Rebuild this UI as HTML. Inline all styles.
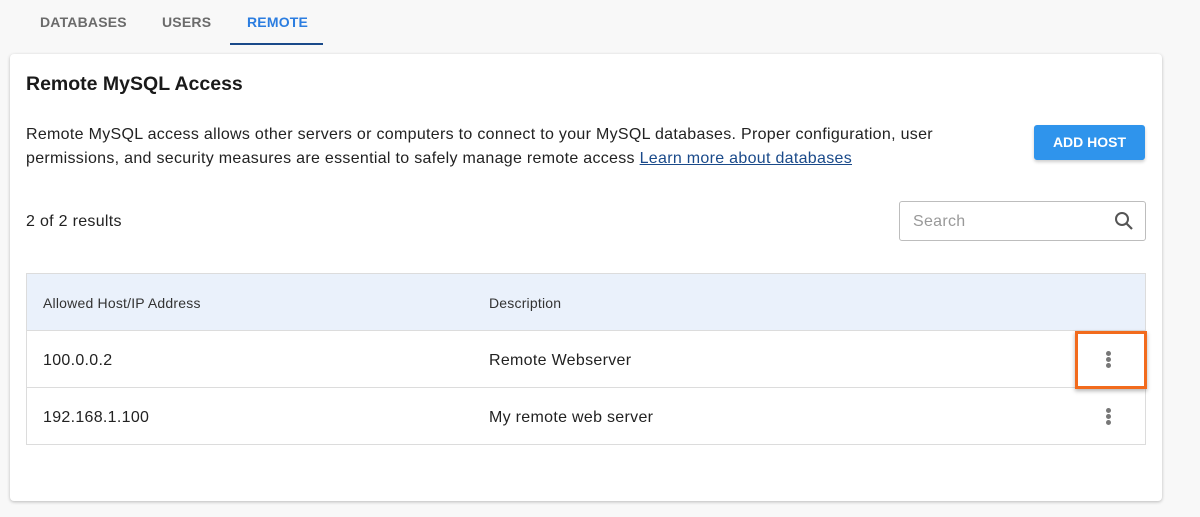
<!DOCTYPE html>
<html><head><style>
*{box-sizing:border-box;margin:0;padding:0}
body{width:1200px;height:517px;background:#f8f8f8;font-family:"Liberation Sans",sans-serif;color:#222;position:relative;overflow:hidden}
.tab{position:absolute;top:14px;font-size:14px;font-weight:bold;letter-spacing:0.2px;color:#6b6b6b}
.card{position:absolute;left:10px;top:54px;width:1152px;height:447px;background:#fff;border-radius:4px;box-shadow:0 1px 3px rgba(0,0,0,.25)}
.abs{position:absolute}
.t16{font-size:16px;letter-spacing:0.3px}
.row{position:absolute;left:26px;width:1120px;border:1px solid #dcdcdc;border-top:none;height:57px}
.dots{position:absolute;left:1106px;width:5px}
.dots i{display:block;width:5px;height:5px;border-radius:50%;background:#777;margin-bottom:1px}
</style></head><body>
<div class="tab" style="left:40px">DATABASES</div>
<div class="tab" style="left:162px">USERS</div>
<div class="tab" style="left:247px;color:#2b7de0">REMOTE</div>
<div class="abs" style="left:230px;top:43px;width:93px;height:2px;background:#1a4a8a"></div>
<div class="card"></div>
<div class="abs" style="left:26px;top:73px;font-size:19.5px;font-weight:bold;color:#1a1a1a">Remote MySQL Access</div>
<div class="abs t16" style="left:26px;top:123px;line-height:24px;width:960px;color:#222">Remote MySQL access allows other servers or computers to connect to your MySQL databases. Proper configuration, user permissions, and security measures are essential to safely manage remote access <span style="color:#1a4a8a;text-decoration:underline">Learn more about databases</span></div>
<div class="abs" style="left:1034px;top:125px;width:111px;height:35px;background:#2f94ec;border-radius:3px;color:#fff;font-weight:bold;font-size:14px;line-height:35px;text-align:center;box-shadow:0 2px 3px rgba(0,0,0,.2)">ADD HOST</div>
<div class="abs t16" style="left:26px;top:213px">2 of 2 results</div>
<div class="abs" style="left:899px;top:201px;width:247px;height:40px;border:1px solid #bdbdbd;border-radius:3px"></div>
<div class="abs t16" style="left:913px;top:213px;color:#999">Search</div>
<svg class="abs" style="left:1113px;top:210px" width="22" height="22" viewBox="0 0 22 22"><circle cx="9" cy="9" r="6" fill="none" stroke="#555" stroke-width="2"/><line x1="13.5" y1="13.5" x2="19" y2="19" stroke="#555" stroke-width="2.2"/></svg>
<div class="abs" style="left:26px;top:273px;width:1120px;height:58px;background:#eaf1fb;border:1px solid #dcdcdc"></div>
<div class="abs" style="left:43px;top:295px;font-size:14px;letter-spacing:0.2px;color:#333">Allowed Host/IP Address</div>
<div class="abs" style="left:489px;top:295px;font-size:14px;letter-spacing:0.2px;color:#333">Description</div>
<div class="row" style="top:331px"></div>
<div class="row" style="top:388px"></div>
<div class="abs t16" style="left:43px;top:352px">100.0.0.2</div>
<div class="abs t16" style="left:489px;top:352px">Remote Webserver</div>
<div class="abs t16" style="left:43px;top:409px">192.168.1.100</div>
<div class="abs t16" style="left:489px;top:409px">My remote web server</div>
<div class="dots" style="top:351px"><i></i><i></i><i></i></div>
<div class="dots" style="top:408px"><i></i><i></i><i></i></div>
<div class="abs" style="left:1075px;top:331px;width:72px;height:58px;border:3px solid #f26b1d;box-shadow:0 2px 4px rgba(0,0,0,.3)"></div>
</body></html>
